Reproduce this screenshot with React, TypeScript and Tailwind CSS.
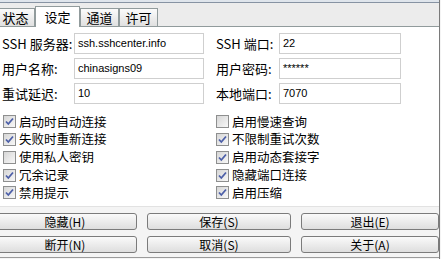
import React from "react";

const cjk = "font-['Noto_Sans_CJK_SC','Noto_Sans',sans-serif]";
const latin = "font-['Liberation_Sans','Noto_Sans_CJK_SC',sans-serif]";

const tabs = [
  { label: "状态", w: "w-[39px]", active: false },
  { label: "设定", w: "w-[45px]", active: true },
  { label: "通道", w: "w-[39px]", active: false },
  { label: "许可", w: "w-[39px]", active: false },
];

const leftChecks = [
  { label: "启动时自动连接", checked: true },
  { label: "失败时重新连接", checked: true },
  { label: "使用私人密钥", checked: false },
  { label: "冗余记录", checked: true },
  { label: "禁用提示", checked: true },
];

const rightChecks = [
  { label: "启用慢速查询", checked: false },
  { label: "不限制重试次数", checked: true },
  { label: "启用动态套接字", checked: true },
  { label: "隐藏端口连接", checked: true },
  { label: "启用压缩", checked: true },
];

const buttons = ["隐藏(H)", "保存(S)", "退出(E)", "断开(N)", "取消(S)", "关于(A)"];

function Check({ checked }: { checked: boolean }) {
  return (
    <span className="flex h-[13px] w-[13px] shrink-0 items-center justify-center border border-[#8e8f8f] bg-gradient-to-br from-[#d6d6d6] to-[#f8f8f8]">
      {checked && (
        <svg width="9" height="9" viewBox="0 0 9 9">
          <path d="M1 4.5 L3.3 7 L8 1.5" fill="none" stroke="#4c5fa8" strokeWidth="1.8" />
        </svg>
      )}
    </span>
  );
}

function Field({ label, value, labelW, inputW }: { label: string; value: string; labelW: string; inputW: string }) {
  return (
    <div className="flex items-center">
      <span className={`${labelW} ${cjk} text-[13px] text-black`}>{label}</span>
      <div className={`${inputW} flex h-[21px] items-center border border-[#cfcfcf] bg-white pl-[3px] ${latin} text-[11px] text-black`}>
        {value}
      </div>
    </div>
  );
}

export default function App() {
  return (
    <div className="h-[259px] w-[441px] overflow-hidden bg-[#f4f4f4]">
      <div className="flex h-full w-[440px] flex-col border-r border-[#7a7a7a]">
        {/* top edge */}
        <div className="h-[3px] shrink-0 border-b border-[#8793a3] bg-[#dfe5ec]" />

        {/* tab strip */}
        <div className="flex h-[24px] shrink-0 items-end border-b border-[#919b9c] bg-[#ececec]">
          <div className="ml-[-4px] flex items-end">
            {tabs.map((t) =>
              t.active ? (
                <div
                  key={t.label}
                  className={`${t.w} relative -mb-px flex h-[21px] items-center justify-center border border-b-0 border-[#919b9c] bg-white ${cjk} text-[13px] text-black`}
                >
                  {t.label}
                </div>
              ) : (
                <div
                  key={t.label}
                  className={`${t.w} flex h-[18px] items-center justify-center border border-b-0 border-[#919b9c] bg-gradient-to-b from-[#fbfbfb] to-[#e0e0e0] ${cjk} text-[13px] text-black`}
                >
                  {t.label}
                </div>
              )
            )}
          </div>
        </div>

        {/* settings panel */}
        <div className="flex h-[179px] shrink-0 flex-col bg-white pt-[6px]">
          <div className="flex flex-col gap-[4px] pl-[2px]">
            <div className="flex gap-[12px]">
              <Field label="SSH 服务器:" value="ssh.sshcenter.info" labelW="w-[72px]" inputW="w-[130px]" />
              <Field label="SSH 端口:" value="22" labelW="w-[63px]" inputW="w-[122px]" />
            </div>
            <div className="flex gap-[12px]">
              <Field label="用户名称:" value="chinasigns09" labelW="w-[72px]" inputW="w-[130px]" />
              <Field label="用户密码:" value="******" labelW="w-[63px]" inputW="w-[122px]" />
            </div>
            <div className="flex gap-[12px]">
              <Field label="重试延迟:" value="10" labelW="w-[72px]" inputW="w-[130px]" />
              <Field label="本地端口:" value="7070" labelW="w-[63px]" inputW="w-[122px]" />
            </div>
          </div>

          <div className="mt-[9px] flex">
            <div className="flex w-[216px] flex-col pl-[3px]">
              {leftChecks.map((c) => (
                <div key={c.label} className="flex h-[17.75px] items-center gap-[3px]">
                  <Check checked={c.checked} />
                  <span className={`${cjk} text-[12.5px] text-black`}>{c.label}</span>
                </div>
              ))}
            </div>
            <div className="flex flex-col">
              {rightChecks.map((c) => (
                <div key={c.label} className="flex h-[17.75px] items-center gap-[3px]">
                  <Check checked={c.checked} />
                  <span className={`${cjk} text-[12.5px] text-black`}>{c.label}</span>
                </div>
              ))}
            </div>
          </div>
        </div>

        {/* buttons */}
        <div className="flex flex-1 flex-col border-t border-[#e2e2e2] bg-[#f4f4f4] pt-[6px]">
          <div className="ml-[-7px] grid grid-cols-[144px_144px_1fr] gap-x-[10px] gap-y-[6px]">
            {buttons.map((b) => (
              <div
                key={b}
                className={`flex h-[17px] items-center justify-center rounded-[3px] border border-[#7b7b7b] bg-gradient-to-b from-[#fafafa] to-[#dedede] ${cjk} text-[12px] leading-none text-black`}
              >
                {b}
              </div>
            ))}
          </div>
          <div className="mt-auto mb-[1px] h-px bg-[#9a9a9a]" />
        </div>
      </div>
    </div>
  );
}
